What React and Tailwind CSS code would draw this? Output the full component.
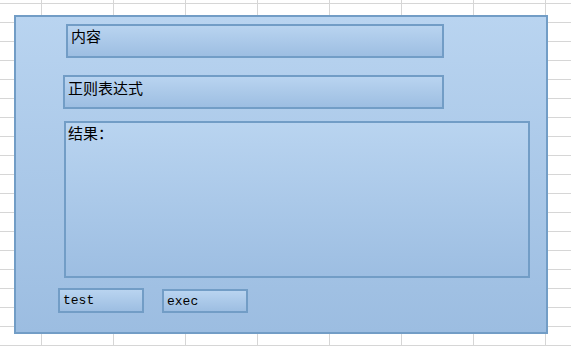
export default function App() {
  const box =
    "border-2 border-[#729dc6] bg-[linear-gradient(to_bottom,#b9d4f0,#9dbee2)] text-black";
  return (
    <div className="w-[571px] h-[346px] bg-white [background-image:linear-gradient(to_right,#d6d6d6_1px,transparent_1px),linear-gradient(to_bottom,#d6d6d6_1px,transparent_1px)] [background-size:72px_19px] [background-position:41px_3px] pl-[14px] pt-[15px] overflow-hidden">
      <div className="w-[534px] h-[319px] border-2 border-[#729dc6] bg-[linear-gradient(to_bottom,#b9d4f0,#9cbde1)] flex flex-col items-start font-['Noto_Sans_CJK_SC',sans-serif]">
        <div className={`${box} ml-[50px] mt-[7px] w-[378px] h-[34px] pl-[3px] pt-[1px] text-[15px] leading-[17px]`}>
          内容
        </div>
        <div className={`${box} ml-[47px] mt-[17px] w-[381px] h-[34px] pl-[3px] pt-[2px] text-[15px] leading-[17px]`}>
          正则表达式
        </div>
        <div className={`${box} ml-[48px] mt-[12px] w-[466px] h-[157px] pl-[2px] pt-[1px] text-[15px] leading-[17px]`}>
          结果：
        </div>
        <div className="flex items-start mt-[10px] ml-[42px] gap-[18px] font-['Liberation_Mono',monospace] text-[13px]">
          <div className={`${box} w-[86px] h-[25px] pl-[3px] pt-[1px] flex items-center`}>test</div>
          <div className={`${box} w-[86px] h-[24px] mt-[1px] pl-[3px] pt-[1px] flex items-center`}>exec</div>
        </div>
      </div>
    </div>
  );
}
